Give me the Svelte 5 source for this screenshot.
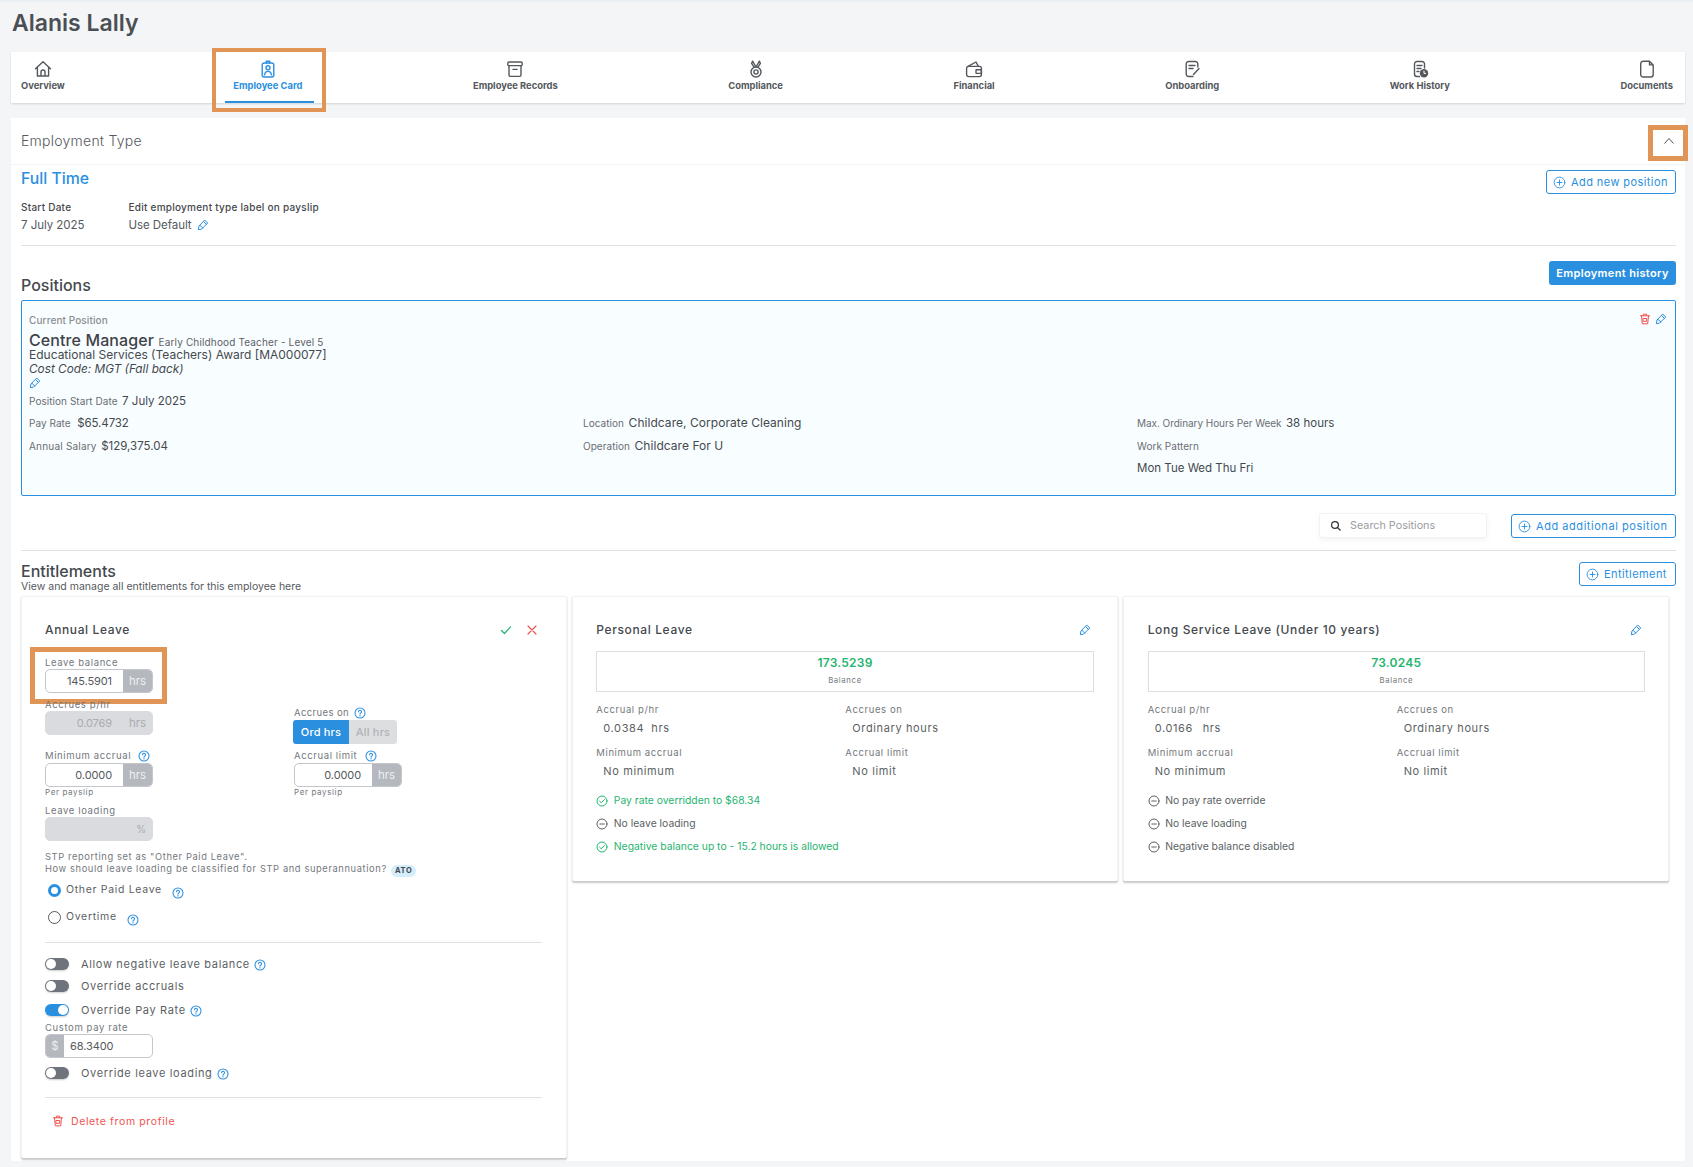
<script>
  const tabs = [
    { label: 'Overview', icon: 'home' },
    { label: 'Employee Card', icon: 'badge', active: true },
    { label: 'Employee Records', icon: 'archive' },
    { label: 'Compliance', icon: 'medal' },
    { label: 'Financial', icon: 'wallet' },
    { label: 'Onboarding', icon: 'note' },
    { label: 'Work History', icon: 'clock' },
    { label: 'Documents', icon: 'doc' }
  ];
  const cards = [
    {
      title: 'Personal Leave', balance: '173.5239', rate: '0.0384',
      items: [
        { on: true, text: 'Pay rate overridden to $68.34' },
        { on: false, text: 'No leave loading' },
        { on: true, text: 'Negative balance up to - 15.2 hours is allowed' }
      ]
    },
    {
      title: 'Long Service Leave (Under 10 years)', balance: '73.0245', rate: '0.0166',
      items: [
        { on: false, text: 'No pay rate override' },
        { on: false, text: 'No leave loading' },
        { on: false, text: 'Negative balance disabled' }
      ]
    }
  ];
</script>

{#snippet navIcon(k)}
  <svg class="nav-ico" viewBox="0 0 18 18" aria-hidden="true">
    {#if k === 'home'}
      <path d="M1.5 8.7 9 1.8l7.5 6.9M3.4 7.2V16h11.2V7.2M7 16v-4a2 2 0 0 1 4 0v4" />
    {:else if k === 'badge'}
      <rect x="3.2" y="3" width="11.6" height="14" rx="2" />
      <path d="M7.3 3V1.2h3.4V3" />
      <circle cx="9" cy="7.8" r="2" />
      <path d="M5.6 14.8c.3-2.4 1.700-3.400 3.400-3.400s3.100 1 3.400 3.400" />
    {:else if k === 'archive'}
      <rect x="1.8" y="2" width="14.4" height="3.6" rx="1.2" />
      <path d="M3 5.6V15a1.4 1.4 0 0 0 1.4 1.4h9.2A1.4 1.4 0 0 0 15 15V5.6M7 9.4h4" />
    {:else if k === 'medal'}
      <path d="M5.6 1.2 9 7l3.4-5.8M5.6 1.2 4.6 3.4l2.6 3.9M12.4 1.2l1 2.2-2.6 3.9" />
      <circle cx="9" cy="12" r="5" />
      <circle cx="9" cy="12" r="2.1" />
    {:else if k === 'wallet'}
      <path d="M3 6.4 11 2l2.4 4.4" />
      <rect x="1.6" y="6.4" width="14.8" height="10.2" rx="2" />
      <rect x="11" y="9.8" width="5.4" height="3.6" rx=".6" />
    {:else if k === 'note'}
      <path d="M14.8 7V4A2.5 2.5 0 0 0 12.300 1.500H5.700A2.500 2.500 0 0 0 3.200 4V14A2.500 2.500 0 0 0 5.700 16.500H10" />
      <path d="M6 5.500h6M6 8.500h4M10.500 14.500 16 8.500" />
    {:else if k === 'clock'}
      <path d="M13.500 8V4A2.500 2.500 0 0 0 11 1.500H6A2.500 2.500 0 0 0 3.500 4V14A2.500 2.500 0 0 0 6 16.500H8.500" />
      <path d="M6 5.500h5M6 8.500h4M6 11.500h2" />
      <circle class="solid" cx="13" cy="13.200" r="4.200" />
      <path class="knock" d="M13 11v2.400h1.700" />
    {:else}
      <path d="M5.200 1.200H11.500L15.200 4.900V14.500A2.500 2.500 0 0 1 12.700 17H5.200A2.500 2.500 0 0 1 2.700 14.500V3.700A2.500 2.500 0 0 1 5.200 1.200ZM11.500 1.200V4.900H15.200" />
    {/if}
  </svg>
{/snippet}

{#snippet pencil()}
  <svg class="ico pencil" viewBox="0 0 12 12" aria-hidden="true">
    <path d="M8 1.300 10.700 4 4.600 10.100 1.300 10.700 1.900 7.400ZM6.700 2.700 9.300 5.300M3 6.300 5.700 9" />
  </svg>
{/snippet}

{#snippet trash()}
  <svg class="ico trash" viewBox="0 0 12 12" aria-hidden="true">
    <path d="M1.500 2.800H10.500M4.300 2.500V1.200H7.700V2.500M2.500 2.800 3.300 10.800H8.700L9.500 2.800M4.300 5.500H7.700V8.300H4.300Z" />
  </svg>
{/snippet}

{#snippet help()}
  <svg class="ico help" viewBox="0 0 12 12" aria-hidden="true">
    <circle cx="6" cy="6" r="5" />
    <path d="M4.500 4.700A1.500 1.500 0 1 1 6.800 6C6.200 6.300 6 6.600 6 7.200M6 8.400V8.900" />
  </svg>
{/snippet}

{#snippet plus()}
  <svg class="ico plus" viewBox="0 0 14 14" aria-hidden="true">
    <circle cx="7" cy="7" r="5.800" />
    <path d="M7 4.300V9.700M4.300 7H9.700" />
  </svg>
{/snippet}

{#snippet status(on)}
  <svg class="ico status" class:on viewBox="0 0 12 12" aria-hidden="true">
    <circle cx="6" cy="6" r="5" />
    {#if on}
      <path d="M3.600 6.200 5.300 7.800 8.400 4.500" />
    {:else}
      <path d="M3.800 6H8.200" />
    {/if}
  </svg>
{/snippet}

{#snippet inputGroup(value)}
  <div class="ig">
    <div class="ig-val">{value}</div>
    <div class="ig-add">hrs</div>
  </div>
{/snippet}

{#snippet toggle(on)}
  <span class="toggle" class:on><span class="knob"></span></span>
{/snippet}

<div class="page">
  <h1>Alanis Lally</h1>

  <nav class="tabs">
    {#each tabs as t}
      <div class="tab" class:active={t.active}>
        {@render navIcon(t.icon)}
        <span>{t.label}</span>
        {#if t.active}<i class="mark mark-tab"></i>{/if}
      </div>
    {/each}
  </nav>

  <section class="panel">
    <header class="panel-head">
      <span>Employment Type</span>
      <span class="chev">
        <svg viewBox="0 0 12 12" aria-hidden="true"><path d="M1.500 8.500 6 3.500l4.500 5" /></svg>
        <i class="mark mark-chev"></i>
      </span>
    </header>

    <div class="panel-body">
      <div class="type-top">
        <div class="full-time">Full Time</div>
        <button class="btn-line btn-new">{@render plus()}Add new position</button>
      </div>
      <div class="meta">
        <div class="meta-start">
          <div class="meta-l">Start Date</div>
          <div class="meta-v">7 July 2025</div>
        </div>
        <div>
          <div class="meta-l">Edit employment type label on payslip</div>
          <div class="meta-v">Use Default {@render pencil()}</div>
        </div>
      </div>
      <hr class="rule rule-type" />

      <div class="pos-head">
        <h2>Positions</h2>
        <button class="btn-solid">Employment history</button>
      </div>

      <div class="pos-card">
        <div class="pos-top">
          <span class="cur">Current Position</span>
          <span class="pos-actions">{@render trash()}{@render pencil()}</span>
        </div>
        <div class="pos-name"><strong>Centre Manager</strong> <small>Early Childhood Teacher - Level 5</small></div>
        <div class="pos-line award">Educational Services (Teachers) Award [MA000077]</div>
        <div class="pos-line cost">Cost Code: MGT (Fall back)</div>
        <div class="pos-line pos-edit">{@render pencil()}</div>
        <div class="kv start"><label>Position Start Date</label> <b>7 July 2025</b></div>
        <div class="pos-grid">
          <div class="kv"><label>Pay Rate</label> <b class="pay">$65.4732</b></div>
          <div class="kv"><label>Location</label> <b class="wide">Childcare, Corporate Cleaning</b></div>
          <div class="kv"><label class="tight">Max. Ordinary Hours Per Week</label> <b>38 hours</b></div>
          <div class="kv"><label class="loose">Annual Salary</label> <b>$129,375.04</b></div>
          <div class="kv"><label>Operation</label> <b class="wide">Childcare For U</b></div>
          <div class="kv"><label>Work Pattern</label></div>
          <div></div>
          <div></div>
          <div class="kv"><b>Mon Tue Wed Thu Fri</b></div>
        </div>
      </div>

      <div class="search-row">
        <div class="search">
          <svg viewBox="0 0 12 12" aria-hidden="true"><circle cx="5" cy="5" r="3.400" /><path d="M7.600 7.600 10.500 10.500" /></svg>
          <span>Search Positions</span>
        </div>
        <button class="btn-line btn-add">{@render plus()}Add additional position</button>
      </div>
      <hr class="rule" />

      <div class="ent-head">
        <div>
          <h2 class="ent-title">Entitlements</h2>
          <p>View and manage all entitlements for this employee here</p>
        </div>
        <button class="btn-line btn-ent">{@render plus()}Entitlement</button>
      </div>

      <div class="cards">
        <article class="card">
          <div class="card-title">
            <h3>Annual Leave</h3>
            <span class="edit-actions">
              <svg class="ico ok" viewBox="0 0 12 12" aria-hidden="true"><path d="M1.500 6.500 4.500 9.500 10.500 2.800" /></svg>
              <svg class="ico no" viewBox="0 0 12 12" aria-hidden="true"><path d="M2 2 10 10M10 2 2 10" /></svg>
            </span>
          </div>

          <div class="field balance-field">
            <label class="fl">Leave balance</label>
            {@render inputGroup('145.5901')}
            <i class="mark mark-bal"></i>
          </div>

          <div class="fields">
            <div class="field">
              <label class="fl">Accrues p/hr</label>
              <div class="ig off"><div class="ig-val">0.0769</div><div class="ig-add">hrs</div></div>
            </div>
            <div class="field accrues">
              <label class="fl">Accrues on <span class="q">{@render help()}</span></label>
              <div class="seg"><span class="seg-on">Ord hrs</span><span class="seg-off">All hrs</span></div>
            </div>
            <div class="field">
              <label class="fl with-gap">Minimum accrual <span class="q">{@render help()}</span></label>
              {@render inputGroup('0.0000')}
              <div class="hint">Per payslip</div>
            </div>
            <div class="field">
              <label class="fl with-gap">Accrual limit <span class="q">{@render help()}</span></label>
              {@render inputGroup('0.0000')}
              <div class="hint">Per payslip</div>
            </div>
          </div>

          <div class="field loading">
            <label class="fl">Leave loading</label>
            <div class="ig off"><div class="ig-val"></div><div class="ig-add pct">%</div></div>
          </div>

          <p class="stp">STP reporting set as "Other Paid Leave".<br />How should leave loading be classified for STP and superannuation? <span class="ato">ATO</span></p>

          <div class="radio r1"><span class="dot on"></span><span>Other Paid Leave</span><span class="q q-r">{@render help()}</span></div>
          <div class="radio r2"><span class="dot"></span><span>Overtime</span><span class="q q-r">{@render help()}</span></div>

          <hr class="rule rule-a" />

          <div class="switch s1">{@render toggle(false)}<span>Allow negative leave balance</span><span class="q">{@render help()}</span></div>
          <div class="switch s2">{@render toggle(false)}<span>Override accruals</span></div>
          <div class="switch s3">{@render toggle(true)}<span>Override Pay Rate</span><span class="q">{@render help()}</span></div>
          <div class="field custom">
            <label class="fl">Custom pay rate</label>
            <div class="ig"><div class="ig-add dollar">$</div><div class="ig-val left">68.3400</div></div>
          </div>
          <div class="switch s4">{@render toggle(false)}<span>Override leave loading</span><span class="q">{@render help()}</span></div>

          <hr class="rule rule-b" />

          <div class="del">{@render trash()}<span>Delete from profile</span></div>
        </article>

        {#each cards as c}
          <article class="card summary">
            <div class="card-title">
              <h3>{c.title}</h3>
              <span class="edit-one">{@render pencil()}</span>
            </div>
            <div class="bal-box">
              <div class="bal-num">{c.balance}</div>
              <div class="bal-cap">Balance</div>
            </div>
            <div class="sum-grid">
              <div>
                <div class="sl">Accrual p/hr</div>
                <div class="sv"><span class="rate">{c.rate}</span>hrs</div>
              </div>
              <div>
                <div class="sl">Accrues on</div>
                <div class="sv">Ordinary hours</div>
              </div>
              <div>
                <div class="sl">Minimum accrual</div>
                <div class="sv">No minimum</div>
              </div>
              <div>
                <div class="sl">Accrual limit</div>
                <div class="sv">No limit</div>
              </div>
            </div>
            <ul class="flags">
              {#each c.items as it}
                <li class:on={it.on}>{@render status(it.on)}<span>{it.text}</span></li>
              {/each}
            </ul>
          </article>
        {/each}
      </div>
    </div>
  </section>
</div>

<style>
  :global(body) {
    margin: 0;
    background: #f3f5f7;
    font-family: Inter, "Open Sans", sans-serif;
    color: #55595e;
  }
  .page {
    border-top: 2px solid #e8eef2;
    padding: 0 8px 0 11px;
    min-height: 1165px;
    box-sizing: border-box;
  }
  h1 {
    margin: 0;
    padding-left: 1px;
    height: 50px;
    line-height: 43px;
    font-size: 23px;
    font-weight: 600;
    color: #4b4f54;
  }
  h2, h3, p { margin: 0; }
  hr.rule {
    margin: 0;
    border: 0;
    border-top: 1px solid #dfe1e3;
  }

  /* tabs */
  .tabs {
    height: 51px;
    background: #fff;
    display: flex;
    justify-content: space-between;
    box-shadow: 0 1px 2px rgba(0, 0, 0, .14);
  }
  .tab {
    position: relative;
    display: flex;
    flex-direction: column;
    align-items: center;
    box-sizing: border-box;
    padding: 8px 12px 0 8px;
    font-size: 9.400px;
    font-weight: 700;
    line-height: 14px;
    color: #54585d;
    white-space: nowrap;
  }
  .tab:first-child { padding: 8px 10px 0; }
  .tab.active {
    color: #2b8fe0;
    border-bottom: 2px solid #2b8fe0;
  }
  .nav-ico {
    width: 18px;
    height: 18px;
    margin-bottom: 1px;
    fill: none;
    stroke: currentColor;
    stroke-width: 1.400;
    stroke-linecap: round;
    stroke-linejoin: round;
  }
  .nav-ico .solid { fill: currentColor; stroke: none; }
  .nav-ico .knock { stroke: #fff; stroke-width: 1; }

  /* orange annotation boxes */
  .mark {
    position: absolute;
    display: block;
    box-sizing: border-box;
    border: 4.500px solid #e09455;
    pointer-events: none;
  }
  .mark-tab { left: -13px; right: -12px; top: -4px; bottom: -11px; }
  .mark-chev { left: -21px; right: -19px; top: -16px; bottom: -20px; border-width: 5px; }
  .mark-bal { left: -15px; right: -14px; top: -10px; bottom: -11px; border-width: 5px; }

  /* panel */
  .panel {
    margin-top: 15px;
    background: #fff;
    height: 1043px;
  }
  .panel-head {
    height: 47px;
    box-sizing: border-box;
    border-bottom: 1px solid #f3f4f5;
    padding: 0 16px 1px 10px;
    display: flex;
    align-items: center;
    justify-content: space-between;
    font-size: 14px;
    letter-spacing: .25px;
    font-weight: 300;
    color: #55595e;
  }
  .chev { position: relative; width: 0; height: 0; display: flex; align-items: center; justify-content: center; }
  .chev svg { flex: none; width: 12px; height: 12px; fill: none; stroke: #555; stroke-width: 1; }
  .panel-body { padding: 0 9px 0 10px; }

  .ico { fill: none; stroke: currentColor; stroke-linecap: round; stroke-linejoin: round; stroke-width: 1; vertical-align: middle; flex: none; }
  .pencil { width: 12px; height: 12px; color: #2b8fe0; }
  .trash { width: 12px; height: 12px; color: #ef5350; }
  .help { width: 12px; height: 12px; color: #2b8fe0; stroke-width: 1.050; }
  .plus { width: 13px; height: 13px; }

  .type-top { display: flex; justify-content: space-between; padding-top: 5px; }
  .full-time { font-size: 15.800px; font-weight: 500; line-height: 18px; color: #2b8fe0; }
  button { font-family: inherit; cursor: pointer; }
  .btn-line {
    height: 24px;
    box-sizing: border-box;
    display: flex;
    align-items: center;
    gap: 5px;
    padding: 0 6px;
    background: #fff;
    border: 1px solid #2b8fe0;
    border-radius: 3px;
    color: #2b8fe0;
    font-size: 11px;
    letter-spacing: .42px;
    white-space: nowrap;
  }
  .btn-new { width: 130px; }
  .btn-add { width: 165px; letter-spacing: .55px; }
  .btn-ent { width: 97px; margin-top: 1px; }
  .btn-solid {
    height: 24px;
    width: 127px;
    padding: 0;
    border: 0;
    border-radius: 3px;
    background: #2b8fe0;
    color: #fff;
    font-size: 11px;
    font-weight: 600;
    letter-spacing: .35px;
  }

  .meta { display: flex; margin-top: 6px; }
  .meta-start { width: 107.500px; }
  .meta-l { font-size: 10px; letter-spacing: .25px; font-weight: 500; line-height: 14px; color: #44484c; }
  .meta-v { font-size: 11.500px; letter-spacing: -.05px; line-height: 16px; margin-top: 3px; color: #55595e; }
  .meta-v .pencil { margin: -2px 0 0 2px; }
  .rule-type { margin-top: 12px !important; }

  .pos-head { display: flex; justify-content: space-between; height: 36px; margin: 15px 0 3px; }
  h2 { font-size: 16px; font-weight: 500; line-height: 24px; color: #45494e; align-self: flex-end; }

  .pos-card {
    height: 196px;
    box-sizing: border-box;
    border: 1px solid #2b8fe0;
    border-radius: 2px;
    background: #f8fdff;
    padding: 12px 8px 0 7px;
    color: #45494e;
  }
  .pos-top { display: flex; justify-content: space-between; line-height: 14px; }
  .cur { font-size: 10px; letter-spacing: .1px; font-weight: 500; color: #8a8e92; }
  .pos-actions { display: flex; gap: 4px; }
  .pos-name { line-height: 18px; margin-top: 4px; height: 17px; white-space: nowrap; }
  .pos-name strong { font-size: 16px; letter-spacing: .1px; font-weight: 500; color: #3f4347; }
  .pos-name small { font-size: 10px; letter-spacing: .15px; color: #5d6166; }
  .pos-line { font-size: 12px; line-height: 14px; height: 14px; }
  .pos-line.pos-edit { height: 13px; line-height: 12px; }
  .cost { font-style: italic; font-size: 11.800px; }
  .kv label { font-size: 10px; letter-spacing: .05px; color: #6a6e73; }
  .kv label.tight { letter-spacing: -.05px; }
  .kv label.loose { letter-spacing: .2px; }
  .kv b { font-size: 11.500px; font-weight: 400; color: #45494e; }
  .kv b.pay { margin-left: 2px; letter-spacing: -.1px; }
  .kv b.wide { font-size: 12px; letter-spacing: .05px; }
  .kv { line-height: 14px; white-space: nowrap; }
  .start { margin-top: 2.500px; }
  .pos-grid {
    display: grid;
    grid-template-columns: repeat(3, 554px);
    grid-auto-rows: 22.700px;
    margin-top: 3px;
    align-items: center;
  }

  .search-row { display: flex; justify-content: flex-end; gap: 24px; margin-top: 17px; height: 25px; align-items: flex-end; }
  .search {
    width: 168px;
    height: 25px;
    box-sizing: border-box;
    display: flex;
    align-items: center;
    gap: 8px;
    padding-left: 10px;
    background: #fff;
    border: 1px solid #f1f2f3;
    border-radius: 3px;
    box-shadow: 0 2px 6px rgba(0, 0, 0, .05);
    font-size: 10.800px;
    color: #9a9da1;
  }
  .search svg { width: 12px; height: 12px; fill: none; stroke: #333; stroke-width: 1.200; flex: none; }
  .search-row + .rule { margin-top: 12px; }

  .ent-head { display: flex; justify-content: space-between; padding-top: 10px; margin-bottom: 4px; height: 31px; }
  .ent-title { line-height: 20px; }
  .ent-head p { font-size: 10.500px; line-height: 12px; color: #55595e; }

  /* cards */
  .cards { display: flex; gap: 5px; align-items: flex-start; margin-right: 7px; }
  .card {
    flex: 1 1 0;
    min-width: 0;
    box-sizing: border-box;
    padding: 26px 24px 30px 23px;
    background: #fff;
    border: 1px solid #f1f2f3;
    border-bottom: 0;
    box-shadow: 0 1.500px 2px rgba(0, 0, 0, .22);
    border-radius: 2px;
    font-size: 9.500px;
    letter-spacing: .62px;
    color: #74787d;
  }
  .card-title { display: flex; justify-content: space-between; align-items: center; height: 14px; }
  h3 { font-size: 12px; font-weight: 500; line-height: 14px; letter-spacing: .62px; color: #45494e; }
  .edit-actions { display: flex; gap: 14px; margin-right: 4px; }
  .ok { width: 12px; height: 12px; color: #1fb56f; stroke-width: 1.200; }
  .no { width: 12px; height: 12px; color: #ef5350; stroke-width: 1.200; }
  .edit-one { margin-right: 3px; }

  .field { position: relative; }
  .balance-field { width: 108px; margin-top: 20px; }
  .fl { display: block; line-height: 12px; white-space: nowrap; }
  .fl .q { margin-left: 4px; }
  .q { display: inline-flex; vertical-align: middle; }
  .with-gap { height: 13px; }
  .fields {
    display: grid;
    grid-template-columns: 249px 1fr;
    row-gap: 6px;
    margin-top: 6px;
  }
  .fields > .field .ig { width: 108px; }
  .accrues { padding-top: 8px; }
  .accrues .fl { height: 13px; letter-spacing: .4px; }
  .accrues .fl .q { margin-left: 2px; }
  .ig {
    display: flex;
    box-sizing: border-box;
    height: 24px;
    border: 1px solid #c3c6cb;
    border-radius: 5px;
    overflow: hidden;
    background: #fff;
    font-size: 11px;
    letter-spacing: -.1px;
    line-height: 22px;
    color: #55595e;
  }
  .ig-val { flex: 1; text-align: right; padding-right: 11px; min-width: 0; }
  .ig-val.left { text-align: left; padding: 0 0 0 6px; }
  .ig-add { width: 29px; background: #b5b8bf; color: #eef0f2; text-align: center; font-size: 11.500px; }
  .ig-add.dollar { width: 18px; }
  .ig.off { background: #d9dbde; border-color: #d9dbde; color: #a9acb0; }
  .ig.off .ig-add { background: transparent; color: #a9acb0; }
  .ig.off .pct { font-size: 10px; width: 22px; }
  .hint { font-size: 8px; line-height: 10px; }
  .seg { display: flex; width: 104px; height: 24px; margin-left: -1px; border-radius: 3px; overflow: hidden; font-size: 11px; font-weight: 500; line-height: 24px; text-align: center; letter-spacing: .2px; }
  .seg-on { width: 56px; background: #2b8fe0; color: #fff; }
  .seg-off { flex: 1; background: #dcdee0; color: #b0b3b6; }
  .loading { width: 108px; margin-top: 8px; }
  .stp { margin-top: 10px; line-height: 12px; white-space: nowrap; font-size: 9.300px; letter-spacing: .62px; }
  .ato {
    display: inline-block;
    padding: 0 4px;
    line-height: 12px;
    border-radius: 6px;
    background: #d4eefb;
    color: #45494e;
    font-size: 7.500px;
    font-weight: 700;
    vertical-align: -1px;
    margin-left: 1px;
  }
  .radio { display: flex; align-items: center; line-height: 18px; height: 18px; font-size: 10.500px; letter-spacing: .68px; color: #5b5f64; padding-left: 3px; }
  .r1 { margin-top: 4px; }
  .r2 { margin-top: 9px; }
  .dot {
    width: 13px;
    height: 13px;
    box-sizing: border-box;
    border: 1px solid #55595e;
    border-radius: 50%;
    margin-right: 5px;
    flex: none;
  }
  .dot.on { border: 3.500px solid #2b8fe0; }
  .q-r { margin: 5px 0 0 10px; }
  .rule-a { margin-top: 16px !important; }
  .rule-b { margin-top: 17px !important; }
  .switch { display: flex; align-items: center; height: 14px; font-size: 11px; letter-spacing: .65px; color: #5b5f64; white-space: nowrap; }
  .switch .q { margin-left: 4px; margin-top: 2px; }
  .s1 { margin-top: 14px; }
  .s2 { margin-top: 8px; }
  .s3 { margin-top: 10px; }
  .s4 { margin-top: 8px; }
  .toggle {
    position: relative;
    width: 24px;
    height: 12px;
    border-radius: 6px;
    background: #6f747c;
    margin-right: 12px;
    flex: none;
    box-shadow: 0 1px 2px rgba(0, 0, 0, .2);
  }
  .toggle.on { background: #2b8fe0; }
  .knob {
    position: absolute;
    top: 1px;
    left: 1px;
    width: 10px;
    height: 10px;
    border-radius: 50%;
    background: #fff;
  }
  .toggle.on .knob { left: 13px; }
  .custom { width: 108px; margin-top: 5px; }
  .del { display: flex; align-items: center; gap: 7px; margin: 16px 0 0 7px; height: 14px; font-size: 10.500px; letter-spacing: .62px; color: #ef5350; }

  /* summary cards */
  .summary { padding: 26px 23px 28px; }
  .summary:last-child { padding-left: 24px; }
  .bal-box {
    height: 41px;
    box-sizing: border-box;
    margin-top: 14px;
    border: 1px solid #dcdee0;
    padding-top: 4px;
    text-align: center;
  }
  .bal-num { font-size: 12px; font-weight: 600; line-height: 14px; letter-spacing: .25px; color: #1fb56f; }
  .bal-cap { font-size: 7.800px; line-height: 10px; margin-top: 5px; color: #74787d; }
  .sum-grid { display: grid; grid-template-columns: 249px 1fr; margin-top: 12px; row-gap: 11px; }
  .sl { line-height: 12px; font-size: 9.500px; letter-spacing: .6px; }
  .sv { margin-top: 4px; padding-left: 7px; line-height: 16px; font-size: 11px; color: #5b5f64; white-space: nowrap; }
  .rate { display: inline-block; width: 48px; }
  .flags { list-style: none; margin: 14px 0 0; padding: 0; display: flex; flex-direction: column; gap: 9px; font-size: 10.350px; letter-spacing: 0; color: #5b5f64; }
  .flags li { display: flex; align-items: center; gap: 5.500px; height: 14px; line-height: 14px; }
  .flags li.on { color: #1fb56f; }
  .status { width: 12px; height: 12px; margin-top: 2px; }
</style>
